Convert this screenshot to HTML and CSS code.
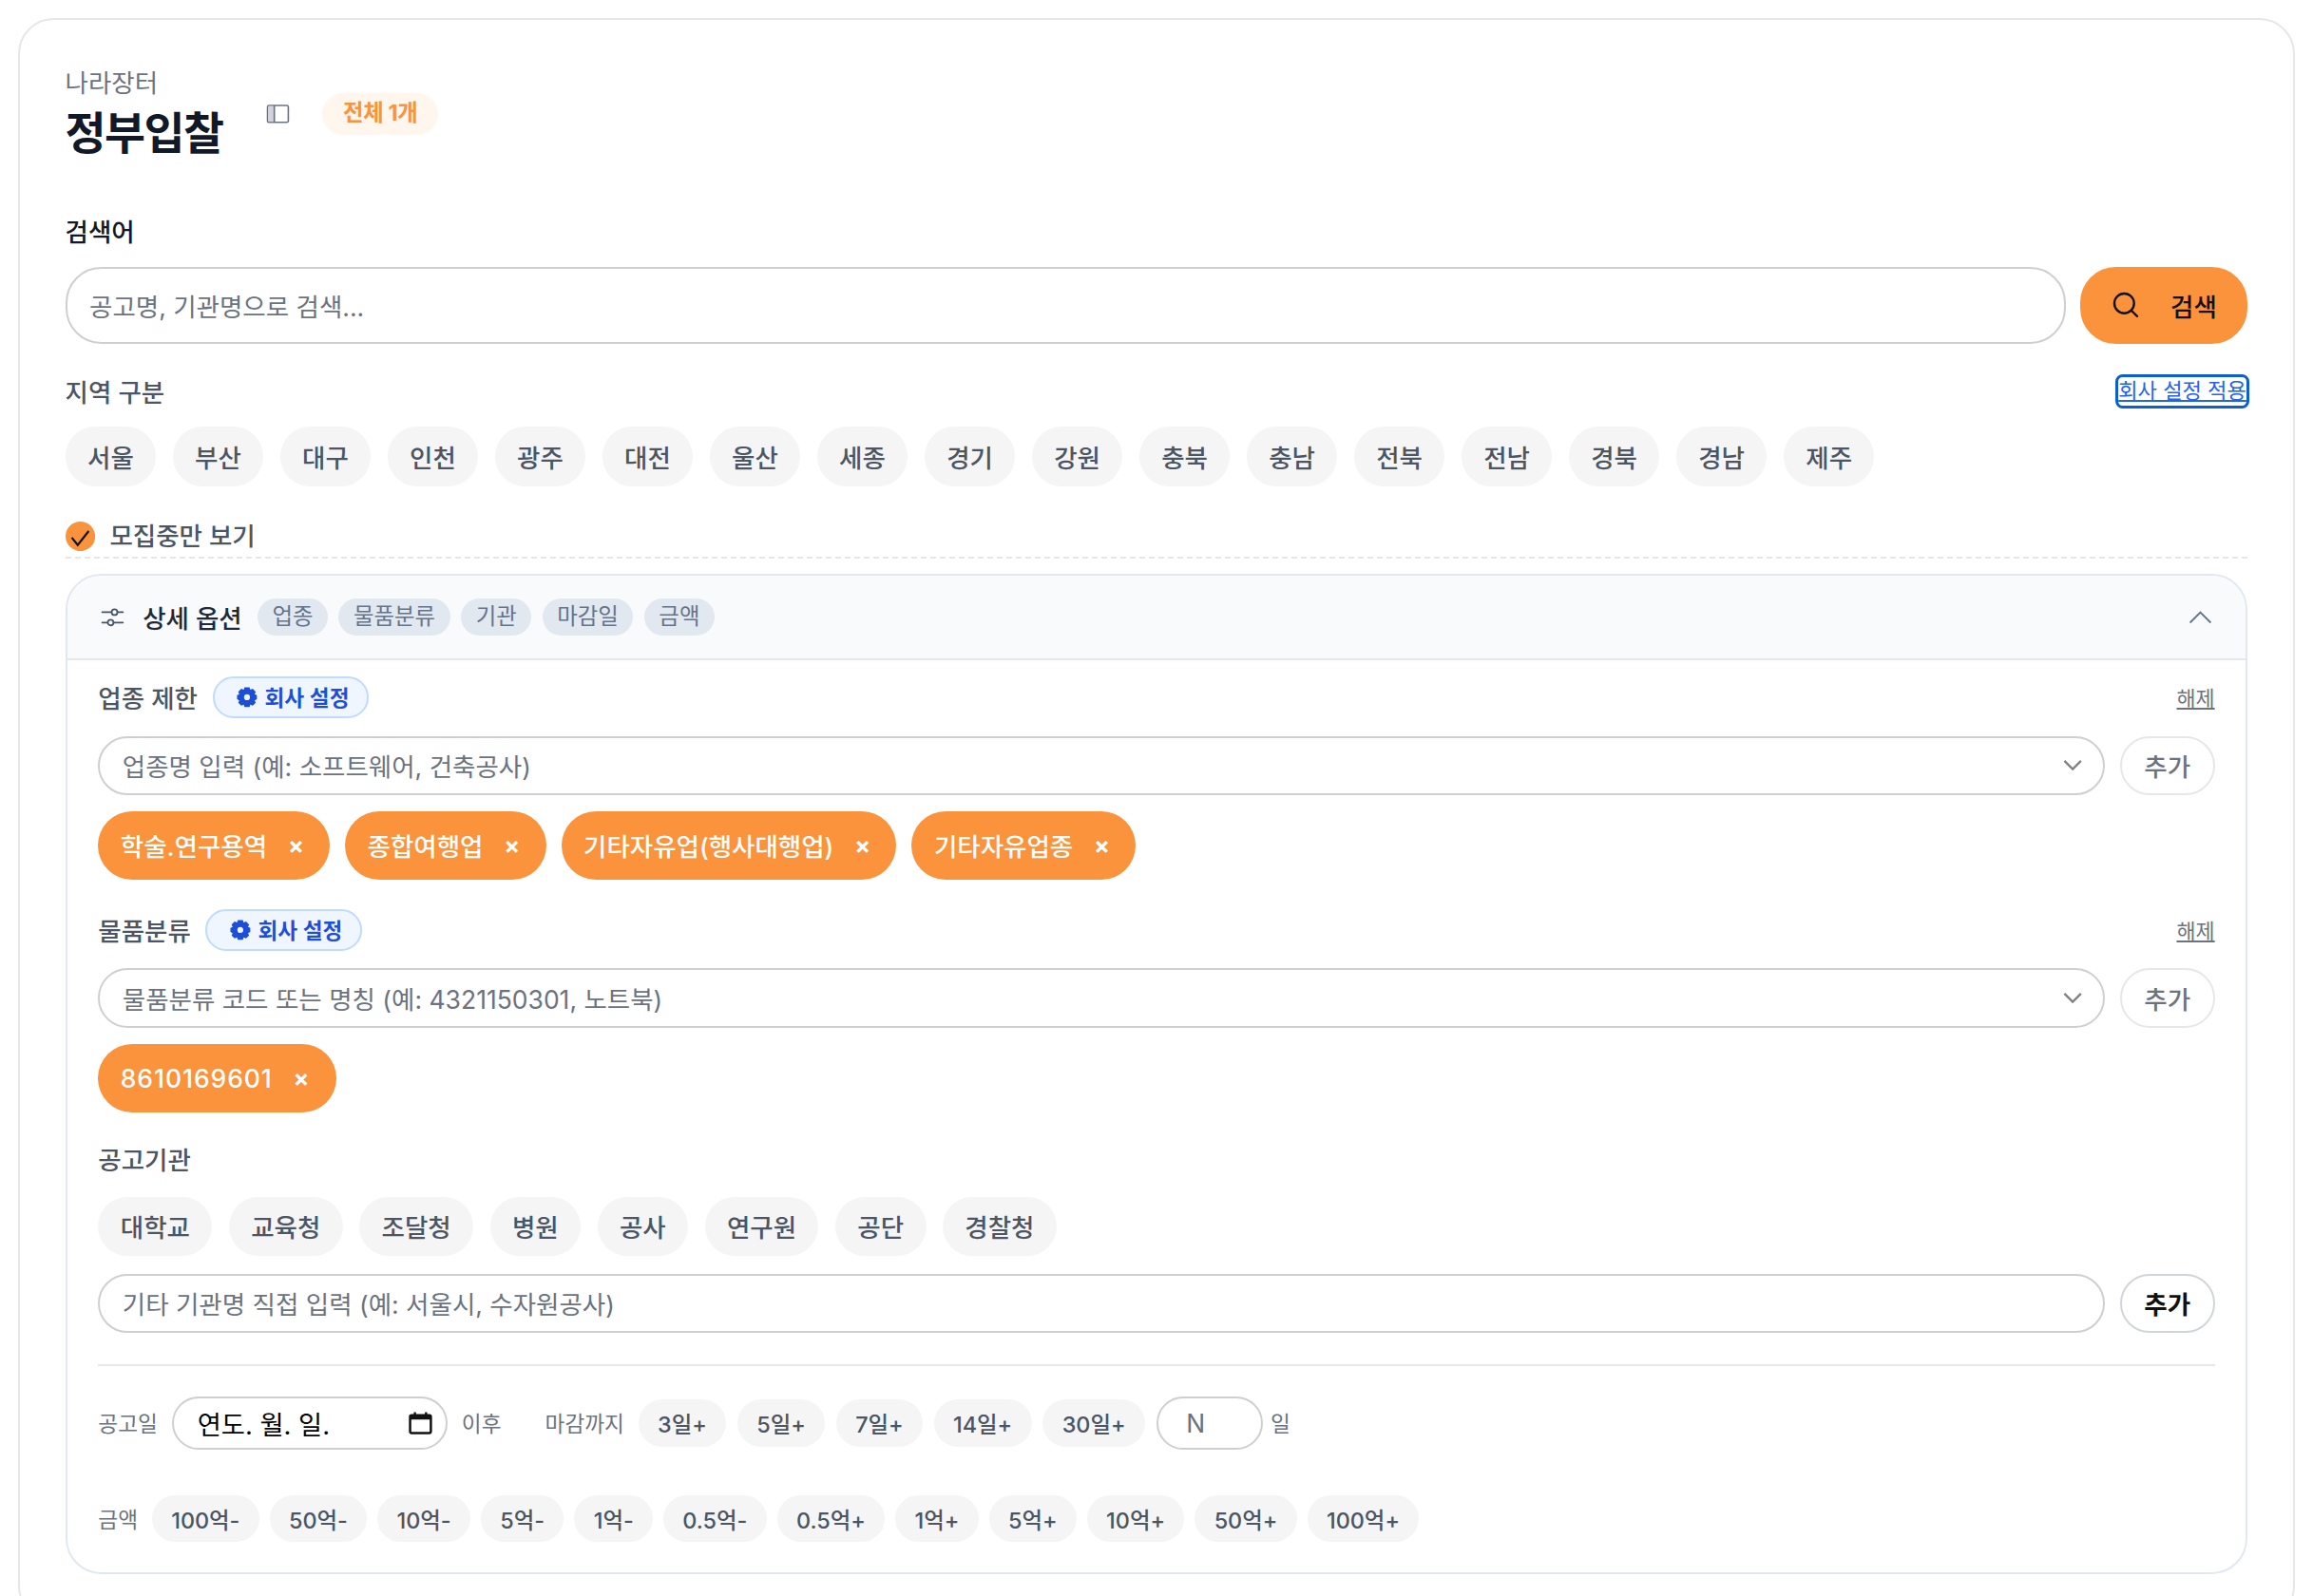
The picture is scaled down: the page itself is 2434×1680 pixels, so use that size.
FILE: index.html
```html
<!DOCTYPE html>
<html lang="ko">
<head>
<meta charset="utf-8">
<title>정부입찰</title>
<link rel="stylesheet" href="styles.css">
</head>
<body>
<main class="card">
  <header class="head">
    <div class="titles">
      <div class="eyebrow">나라장터</div>
      <h1 class="title">정부입찰</h1>
    </div>
    <svg class="panel-icon" viewBox="0 0 18 16"><rect x="1" y="1.5" width="16" height="13" rx="1.2" fill="none" stroke="#6b7280" stroke-width="1.2"/><rect x="1.6" y="2" width="4.6" height="12" fill="#d1d5db"/><path d="M6.2 1.5v13" stroke="#6b7280" stroke-width="1.2"/></svg>
    <span class="count">전체 1개</span>
  </header>

  <div class="strong-label">검색어</div>
  <div class="search-row">
    <div class="field field-big"><span>공고명, 기관명으로 검색...</span></div>
    <button class="search-btn"><svg class="search-icon" viewBox="0 0 20 20"><circle cx="9" cy="9" r="7" fill="none" stroke="#111" stroke-width="1.6"/><path d="M14 14l4.2 4.2" stroke="#111" stroke-width="1.6" stroke-linecap="round"/></svg><span>검색</span></button>
  </div>

  <div class="region-head">
    <span class="plain-label">지역 구분</span>
    <a class="focus-link" href="#">회사 설정 적용</a>
  </div>
  <div class="chips">
    <span class="chip">서울</span><span class="chip">부산</span><span class="chip">대구</span><span class="chip">인천</span><span class="chip">광주</span><span class="chip">대전</span><span class="chip">울산</span><span class="chip">세종</span><span class="chip">경기</span><span class="chip">강원</span><span class="chip">충북</span><span class="chip">충남</span><span class="chip">전북</span><span class="chip">전남</span><span class="chip">경북</span><span class="chip">경남</span><span class="chip">제주</span>
  </div>

  <label class="check-row">
    <svg class="check" viewBox="0 0 20 20"><circle cx="10" cy="10" r="10" fill="#fb923c"/><path d="M4.2 10.800l4 5L15.600 6.400" fill="none" stroke="#111" stroke-width="1.4"/></svg>
    <span>모집중만 보기</span>
  </label>

  <section class="panel">
    <div class="panel-head">
      <svg class="sliders" viewBox="0 0 18 16"><path d="M1 4h7M13 4h4M1 12h4M10 12h7" stroke="#475569" stroke-width="1.3" stroke-linecap="round" fill="none"/><circle cx="10.500" cy="4" r="2.200" fill="none" stroke="#475569" stroke-width="1.300"/><circle cx="7.500" cy="12" r="2.200" fill="none" stroke="#475569" stroke-width="1.300"/></svg>
      <span class="panel-title">상세 옵션</span>
      <span class="mini">업종</span><span class="mini">물품분류</span><span class="mini">기관</span><span class="mini">마감일</span><span class="mini">금액</span>
      <svg class="chev-up" viewBox="0 0 16 9"><path d="M1 8l7-7 7 7" fill="none" stroke="#64748b" stroke-width="1.200"/></svg>
    </div>
    <div class="panel-body">
      <div class="sec-head">
        <span class="sec-label">업종 제한</span>
        <span class="badge"><svg class="gear" viewBox="0 0 14 14"><path fill-rule="evenodd" d="M5.300.3h3.400l.5 1.600 1.700-.6 2 2-.7 1.600 1.500.7v2.800l-1.500.7.700 1.600-2 2-1.700-.6-.5 1.600H5.300l-.5-1.600-1.700.6-2-2 .7-1.600L.3 8.400V5.600l1.500-.7-.7-1.600 2-2 1.700.6zM7 5a2 2 0 1 0 0 4 2 2 0 0 0 0-4z" fill="#1d4ed8"/></svg>회사 설정</span>
        <a class="clear" href="#">해제</a>
      </div>
      <div class="input-row">
        <div class="field"><span>업종명 입력 (예: 소프트웨어, 건축공사)</span><svg class="chev" viewBox="0 0 14 8"><path d="M1 1l6 6 6-6" fill="none" stroke="#808080" stroke-width="1.6"/></svg></div>
        <button class="add">추가</button>
      </div>
      <div class="tags">
        <span class="tag">학술.연구용역<i>×</i></span><span class="tag">종합여행업<i>×</i></span><span class="tag">기타자유업(행사대행업)<i>×</i></span><span class="tag">기타자유업종<i>×</i></span>
      </div>

      <div class="sec-head sec-gap">
        <span class="sec-label">물품분류</span>
        <span class="badge"><svg class="gear" viewBox="0 0 14 14"><path fill-rule="evenodd" d="M5.300.3h3.400l.5 1.600 1.700-.6 2 2-.7 1.600 1.500.7v2.800l-1.500.7.700 1.600-2 2-1.700-.6-.5 1.600H5.300l-.5-1.600-1.700.6-2-2 .7-1.600L.3 8.400V5.600l1.500-.7-.7-1.600 2-2 1.700.6zM7 5a2 2 0 1 0 0 4 2 2 0 0 0 0-4z" fill="#1d4ed8"/></svg>회사 설정</span>
        <a class="clear" href="#">해제</a>
      </div>
      <div class="input-row">
        <div class="field"><span>물품분류 코드 또는 명칭 (예: 4321150301, 노트북)</span><svg class="chev" viewBox="0 0 14 8"><path d="M1 1l6 6 6-6" fill="none" stroke="#808080" stroke-width="1.6"/></svg></div>
        <button class="add">추가</button>
      </div>
      <div class="tags">
        <span class="tag tag-code">8610169601<i>×</i></span>
      </div>

      <div class="sec-label agency-label">공고기관</div>
      <div class="chips">
        <span class="chip">대학교</span><span class="chip">교육청</span><span class="chip">조달청</span><span class="chip">병원</span><span class="chip">공사</span><span class="chip">연구원</span><span class="chip">공단</span><span class="chip">경찰청</span>
      </div>
      <div class="input-row">
        <div class="field"><span>기타 기관명 직접 입력 (예: 서울시, 수자원공사)</span></div>
        <button class="add add-dark">추가</button>
      </div>
      <hr class="rule">
      <div class="date-row">
        <span class="small-label">공고일</span>
        <div class="date-field"><span>연도. 월. 일.</span><svg class="cal" viewBox="0 0 16 16"><path d="M2 3h12a1 1 0 0 1 1 1v10a1 1 0 0 1-1 1H2a1 1 0 0 1-1-1V4a1 1 0 0 1 1-1z" fill="none" stroke="#111" stroke-width="1.6"/><path d="M1 3h14v3H1zM3.500 1h1.500v2H3.500zM11 1h1.500v2H11z" fill="#111"/></svg></div>
        <span class="small-label after">이후</span>
        <span class="small-label until">마감까지</span>
        <span class="pill">3일+</span><span class="pill">5일+</span><span class="pill">7일+</span><span class="pill">14일+</span><span class="pill">30일+</span>
        <div class="n-field">N</div>
        <span class="small-label day">일</span>
      </div>
      <div class="amount-row">
        <span class="small-label">금액</span>
        <span class="pill">100억-</span><span class="pill">50억-</span><span class="pill">10억-</span><span class="pill">5억-</span><span class="pill">1억-</span><span class="pill">0.5억-</span><span class="pill">0.5억+</span><span class="pill">1억+</span><span class="pill">5억+</span><span class="pill">10억+</span><span class="pill">50억+</span><span class="pill">100억+</span>
      </div>
    </div>
  </section>
</main>
</body>
</html>
```
FILE: styles.css
```css
html { zoom: 1.56; overflow: hidden; height: 100%; background: #fff; }
body {
  margin: 0; height: 100%; overflow: hidden;
  font-family: Inter, "Noto Sans CJK KR", "Noto Sans", sans-serif;
  font-size: 17px; color: #111827;
}
* { box-sizing: border-box; }
.card {
  margin: 12px; height: 1082px;
  border: 1.3px solid #e5e7eb; border-radius: 24px;
  padding: 30.7px 30.7px 0;
}
.head { display: flex; align-items: flex-start; height: 64px; }
.eyebrow { font-size: 17px; line-height: 24px; color: #6b7280; }
.title { margin: 4px 0 0; font-size: 30px; line-height: 36px; font-weight: 700; letter-spacing: -1px; color: #111827; }
.panel-icon { width: 16px; height: 14px; margin: 26px 0 0 29px; }
.count { margin: 19px 0 0 22px; height: 28px; padding: 0 14px; border-radius: 14px; background: #fff7ed; color: #fb923c; font-size: 15px; font-weight: 700; line-height: 27px; letter-spacing: -0.2px; }
.strong-label { margin-top: 37px; line-height: 24px; font-weight: 500; color: #111827; }
.search-row { display: flex; gap: 10px; margin-top: 11px; }
.field {
  flex: 1; height: 40px; display: flex; align-items: center; justify-content: space-between;
  padding: 0 15px; border: 1.3px solid #cfcfcf; border-radius: 20px; background: #fff;
  color: #6b7280; font-size: 17px;
}
.field-big { height: 52px; border-radius: 24px; }
.search-btn {
  width: 113px; height: 52px; border: 0; border-radius: 24px; background: #fb923c;
  display: flex; align-items: center; justify-content: center; gap: 21px;
  font: 500 17px Inter, "Noto Sans CJK KR", sans-serif; color: #111;
}
.search-icon { width: 19px; height: 19px; }
.region-head { display: flex; justify-content: space-between; align-items: center; margin-top: 20px; height: 24px; }
.plain-label { color: #4b5563; font-weight: 500; }
.focus-link { margin-right: 1px; font-size: 14.2px; line-height: 19px; color: #2563eb; text-decoration: underline; outline: 2px solid #0b5fd3; outline-offset: 0; border-radius: 3px; }
.chips { display: flex; gap: 11.2px; margin-top: 12px; }
.chip { display: flex; align-items: center; height: 40px; padding: 0 15px; border-radius: 20px; background: #f5f5f5; color: #4b5563; font-weight: 500; }
.check-row { display: flex; align-items: center; gap: 10px; margin-top: 24px; padding-bottom: 4px; line-height: 20px; border-bottom: 1.3px dashed #e5e7eb; color: #4b5563; font-weight: 500; }
.check { width: 20px; height: 20px; }
.panel { margin-top: 10px; border: 1.3px solid #e2e8f0; border-radius: 24px; overflow: hidden; }
.panel-head { display: flex; align-items: center; gap: 7.3px; height: 57px; padding: 0 23px; background: #f8fafc; border-bottom: 1.3px solid #e2e8f0; }
.sliders { width: 16px; height: 14px; margin-right: 4.7px; }
.panel-title { font-weight: 500; color: #1f2937; margin-right: 3px; }
.mini { height: 25px; padding: 0 10px; border-radius: 13px; background: #e2e8f0; color: #64748b; font-size: 15px; line-height: 24px; }
.chev-up { width: 16px; height: 9px; margin-left: auto; }
.panel-body { padding: 11px 21px 20px; }
.sec-head { display: flex; align-items: center; height: 28px; gap: 10px; }
.sec-gap { margin-top: 20px; }
.sec-label { color: #4b5563; font-weight: 500; }
.badge { display: flex; align-items: center; gap: 5px; height: 28px; padding: 0 12px 0 15px; border: 1.3px solid #bfdbfe; border-radius: 14px; background: #eff6ff; color: #1d4ed8; font-size: 14.5px; font-weight: 600; }
.gear { width: 14px; height: 14px; }
.clear { margin-left: auto; font-size: 14px; color: #6b7280; text-decoration: underline; }
.input-row { display: flex; gap: 10px; margin-top: 12px; }
.chev { width: 13px; height: 8px; margin-right: -1px; }
.add { width: 64px; height: 40px; border: 1.3px solid #e5e7eb; border-radius: 20px; background: #fff; color: #6b7280; font: 500 17px Inter, "Noto Sans CJK KR", sans-serif; padding: 0; }
.add-dark { border-color: #d1d5db; color: #111; font-weight: 700; }
.tags { display: flex; gap: 10.3px; margin-top: 11px; }
.tag { display: flex; align-items: center; height: 46px; padding: 0 17.5px 0 15px; border-radius: 23px; background: #fb923c; color: #fff; font-weight: 500; }
.tag i { font-style: normal; font-weight: 700; margin-left: 14px; font-size: 16px; }
.tag-code { letter-spacing: 0.6px; }
.agency-label { margin-top: 21px; line-height: 24px; }
.rule { margin: 21px 0 0; border: 0; height: 1.3px; background: #e5e7eb; }
.date-row { display: flex; align-items: center; gap: 7.6px; margin-top: 20.500px; height: 36px; }
.amount-row { display: flex; align-items: center; gap: 7.1px; margin-top: 30.500px; height: 32px; }
.small-label { color: #6b7280; font-size: 14.5px; }
.date-row .small-label:first-child { margin-right: 2px; }
.amount-row .small-label { margin-right: 2.500px; }
.after { margin-left: 2px; }
.until { margin-left: 22px; margin-right: 2px; }
.day { margin-left: -2.500px; }
.date-field { width: 186px; height: 36px; display: flex; align-items: center; justify-content: space-between; padding: 0 9px 0 16px; border: 1.3px solid #cfcfcf; border-radius: 18px; color: #000; font-size: 17.5px; }
.cal { width: 16px; height: 16px; }
.n-field { width: 72px; height: 36px; padding-left: 19px; border: 1.3px solid #cfcfcf; border-radius: 18px; line-height: 34px; color: #6b7280; }
.pill { display: flex; align-items: center; height: 32px; padding: 0 13px; border-radius: 16px; background: #f5f5f5; color: #4b5563; font-size: 15px; font-weight: 500; }
```
